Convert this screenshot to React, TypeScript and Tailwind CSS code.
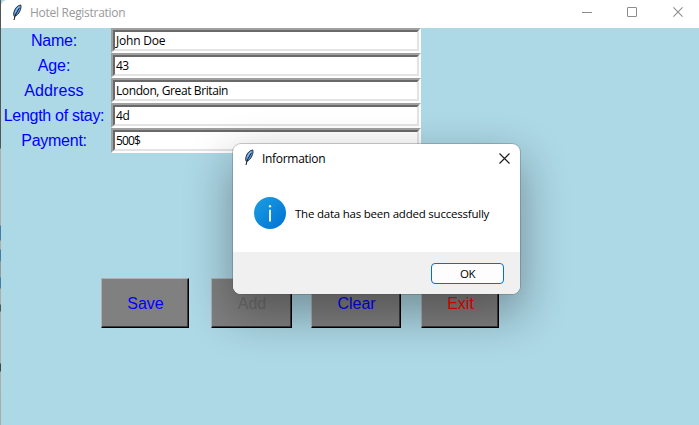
import React from "react";

const fields = [
  { label: "Name:", value: "John Doe", track: "tracking-[-0.2px]", vtrack: "tracking-[-0.2px]" },
  { label: "Age:", value: "43", track: "tracking-[-0.1px]", vtrack: "tracking-[-0.5px]" },
  { label: "Address", value: "London, Great Britain", track: "tracking-[0.1px]", vtrack: "tracking-[-0.4px]" },
  { label: "Length of stay:", value: "4d", track: "tracking-[-0.3px]", vtrack: "tracking-[-0.4px]" },
  { label: "Payment:", value: "500$", track: "tracking-[-0.25px]", vtrack: "tracking-[-0.9px]" },
];

const buttons = [
  { label: "Save", cls: "w-[88px] text-[#0000ff] mr-[22px]" },
  { label: "Add", cls: "w-[81px] text-[#6d6d6d] mr-[19px]" },
  { label: "Clear", cls: "w-[90px] text-[#0000ff] mr-[20px]" },
  { label: "Exit", cls: "w-[78px] text-[#ff0000]" },
];

function Feather() {
  return (
    <svg width="12" height="17" viewBox="0 0 12 17" className="shrink-0">
      <path d="M9.800 1C6.800 1.200 4.200 4 3.200 7.200c-.7 2-.7 4 0 5.200 2.400-.5 4.600-2.600 5.700-5.400C9.900 5 10.300 2.800 9.800 1z" fill="#5c9be0" stroke="#1c2530" strokeWidth=".9" />
      <path d="M8.300 4.200C6 7.500 4 11 3 16" fill="none" stroke="#0d131c" strokeWidth="1" />
      <path d="M8.200 2.700C6.500 4 5.200 6 4.600 8.400" fill="none" stroke="#a5cdf5" strokeWidth=".8" />
    </svg>
  );
}

function Cross({ color, size }: { color: string; size: number }) {
  return (
    <svg width={size} height={size} viewBox="0 0 11 11" fill="none" stroke={color} strokeWidth="1.2">
      <path d="M.5.5l10 10M10.500.5l-10 10" />
    </svg>
  );
}

function InfoIcon() {
  return (
    <svg width="32" height="32" viewBox="0 0 32 32" className="shrink-0">
      <defs>
        <linearGradient id="info" x1="0" y1="0" x2="1" y2="1">
          <stop offset="0" stopColor="#1c9fe2" />
          <stop offset="1" stopColor="#0070d4" />
        </linearGradient>
      </defs>
      <circle cx="16" cy="16" r="16" fill="url(#info)" />
      <circle cx="16" cy="9.300" r="1.200" fill="#fff" />
      <path d="M16 12.800v11.700" stroke="#fff" strokeWidth="1.800" />
    </svg>
  );
}

function Dialog() {
  return (
    <div className="absolute left-[233px] top-[144px] flex h-[150px] w-[287px] flex-col overflow-hidden rounded-[8px] bg-white font-['Open_Sans','Noto_Sans',sans-serif] text-black shadow-[0_0_0_1px_rgba(70,80,85,0.28),0_18px_46px_3px_rgba(0,0,0,0.33)]">
      <div className="flex h-[30px] items-center pl-[10px] pr-[10px]">
        <div className="mt-[-3px]"><Feather /></div>
        <span className="ml-[7px] text-[12px] leading-[16px] tracking-[-0.3px]">Information</span>
        <span className="ml-auto mt-[-2px]"><Cross color="#202020" size={11} /></span>
      </div>
      <div className="flex h-[78px] items-center pl-[21px]">
        <InfoIcon />
        <span className="ml-[9px] mt-px whitespace-nowrap text-[11.500px] leading-[16px] tracking-[-0.22px]">The data has been added successfully</span>
      </div>
      <div className="flex flex-1 items-start justify-end bg-[#f0f0f0] pr-[16px] pt-[11px]">
        <button className="flex h-[21px] w-[73px] items-center justify-center rounded-[4px] border border-[#0071cc] bg-[#fdfdfd] text-[11.500px] leading-[16px] tracking-[-0.5px]">OK</button>
      </div>
    </div>
  );
}

export default function App() {
  return (
    <div className="relative flex h-[425px] w-[699px] overflow-hidden bg-[#add8e6]">
      <div className="w-px shrink-0 bg-[linear-gradient(to_bottom,#555_0px,#555_148px,#b5aaa8_149px,#b5aaa8_225px,#447da8_226px,#447da8_240px,#b5aaa8_241px,#b5aaa8_249px,#447da8_250px,#447da8_260px,#999_262px,#999_277px,#447da8_278px,#447da8_288px,#b5aaa8_289px,#b5aaa8_304px,#555_305px,#555_311px,#b5aaa8_312px,#b5aaa8_363px,#444_364px,#444_371px,#b5aaa8_372px,#aaa_425px)]" />
      <div className="flex min-w-0 flex-1 flex-col">
        <header className="flex h-[28px] items-center rounded-tl-[6px] bg-white pl-[10px] pr-[16px]">
          <div className="mt-[-4px]"><Feather /></div>
          <span className="ml-[7px] mt-[-2px] font-['Open_Sans','Noto_Sans',sans-serif] text-[12px] leading-[16px] tracking-[-0.28px] text-[#999]">Hotel Registration</span>
          <div className="ml-auto mt-[-4px] flex items-center">
            <span className="mr-[35px] h-px w-[10px] bg-[#8c8c8c]" />
            <span className="mr-[36px] h-[10px] w-[10px] rounded-[1px] border border-[#8c8c8c]" />
            <Cross color="#8c8c8c" size={10} />
          </div>
        </header>
        <div className="flex flex-col">
          {fields.map((f) => (
            <div key={f.label} className="flex h-[25px]">
              <div className={"flex w-[110px] items-center justify-center whitespace-nowrap pr-[4px] font-['Liberation_Sans',sans-serif] text-[16px] leading-[25px] text-[#0000ff] " + f.track}>{f.label}</div>
              <div className="h-[25px] w-[310px] border-2 border-b-white border-l-[#a0a0a0] border-r-white border-t-[#a0a0a0]">
                <div className="flex h-full items-center border-2 border-b-[#e3e3e3] border-l-[#696969] border-r-[#e3e3e3] border-t-[#696969] bg-white pl-px">
                  <span className={"font-['Open_Sans','Noto_Sans',sans-serif] text-[12px] leading-[16px] text-black " + f.vtrack}>{f.value}</span>
                </div>
              </div>
            </div>
          ))}
        </div>
        <div className="mt-[125px] flex pl-[100px]">
          {buttons.map((b) => (
            <button key={b.label} className={"flex h-[50px] items-center justify-center border border-b-black border-l-[#b0b0b0] border-r-black border-t-[#b0b0b0] bg-[#808080] pl-px pt-px font-['Liberation_Sans',sans-serif] text-[16px] leading-[20px] shadow-[inset_-1px_-1px_0_#3a3a3a] " + b.cls}>{b.label}</button>
          ))}
        </div>
      </div>
      <Dialog />
    </div>
  );
}
